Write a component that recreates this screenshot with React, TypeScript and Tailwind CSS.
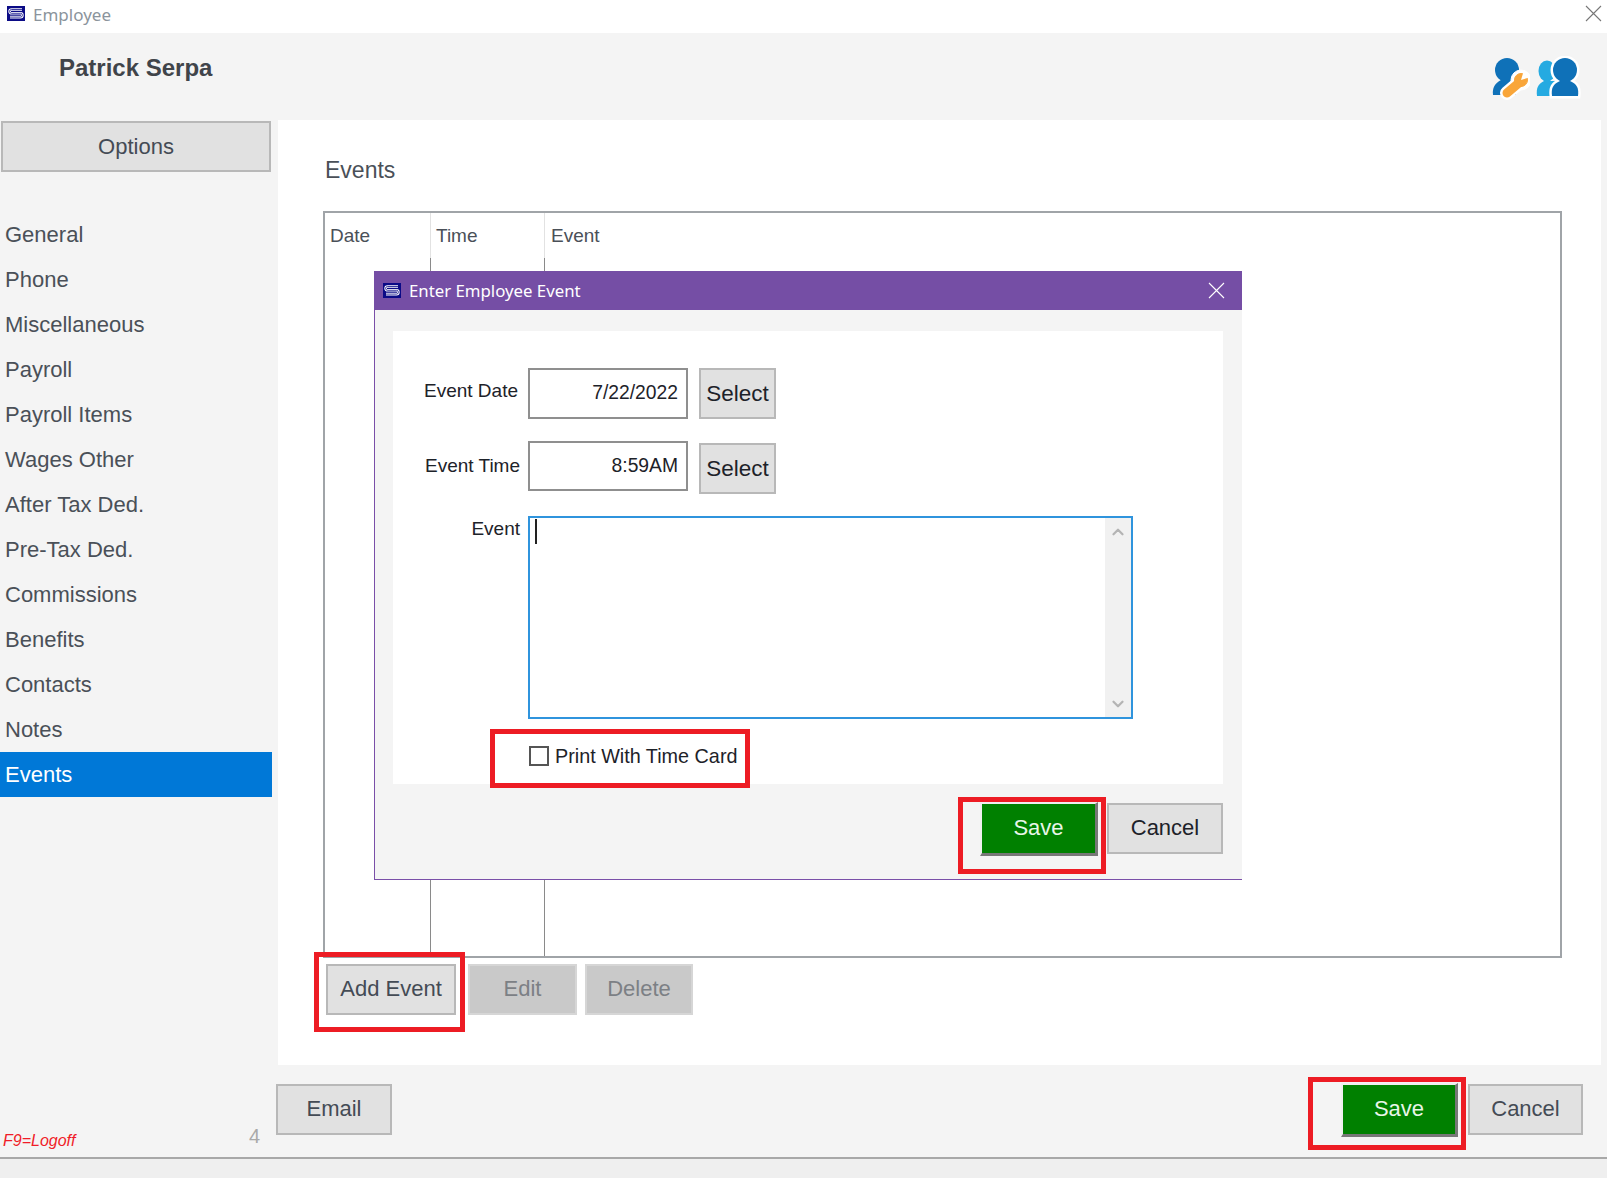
import { ChevronUp, ChevronDown } from "lucide-react"

const NAV = [
  "General",
  "Phone",
  "Miscellaneous",
  "Payroll",
  "Payroll Items",
  "Wages Other",
  "After Tax Ded.",
  "Pre-Tax Ded.",
  "Commissions",
  "Benefits",
  "Contacts",
  "Notes",
  "Events",
]

// ---- small app logo --------------------------
function Logo() {
  const s = "M15 3.500H4.500a1.800 1.800 0 0 0 0 3.800h9a1.800 1.800 0 0 1 0 3.800H3"
  return (
    <svg width="18" height="15" viewBox="0 0 18 15" className="shrink-0">
      <rect width="18" height="15" fill="#0b0b86" />
      <path d={s} fill="none" stroke="#fff" strokeWidth="2.600" />
      <path d={s} fill="none" stroke="#0b0b86" strokeWidth="0.800" />
    </svg>
  )
}

function CloseGlyph({ color }: { color: string }) {
  return (
    <svg width="17" height="17" viewBox="0 0 17 17" className="shrink-0">
      <path d="M1 1l15 15M16 1L1 16" stroke={color} strokeWidth="1.100" />
    </svg>
  )
}

function ToolIcons() {
  const wrench = (
    <>
      <path d="M17 37L30 26" strokeWidth="9" strokeLinecap="round" />
      <circle cx="31" cy="24" r="6.500" strokeWidth="1" />
    </>
  )
  return (
    <div className="flex items-start gap-[5px]">
      <svg width="40" height="44" viewBox="0 0 40 44">
        <ellipse cx="17" cy="14" rx="12" ry="12" fill="#0f71b8" />
        <path d="M3 39C2 32 5 27 11 24L26 24L26 39z" fill="#0f71b8" />
        <g stroke="#fff" fill="#fff">
          <path d="M17 37L30 26" strokeWidth="14" strokeLinecap="round" />
          <circle cx="31" cy="24" r="10" />
        </g>
        <g stroke="#f9a63a" fill="#f9a63a">{wrench}</g>
        <path d="M31 24L34 14L41 21z" fill="#fff" />
      </svg>
      <svg width="47" height="44" viewBox="0 0 47 44">
        <ellipse cx="12" cy="15" rx="8.500" ry="10.500" fill="#25aae1" />
        <path d="M2 40C1 32 3 28 9 25L22 25L22 40z" fill="#25aae1" />
        <g fill="#fff" stroke="#fff" strokeWidth="5">
          <ellipse cx="30" cy="14" rx="12" ry="12" />
          <path d="M17 40C16 32 18 28 25 25L35 25C42 28 44 32 43 40z" />
        </g>
        <ellipse cx="30" cy="14" rx="12" ry="12" fill="#0f71b8" />
        <path d="M17 40C16 32 18 28 25 25L35 25C42 28 44 32 43 40z" fill="#0f71b8" />
      </svg>
    </div>
  )
}

function GrayButton({ label, className = "" }: { label: string; className?: string }) {
  return (
    <button className={`flex items-center justify-center bg-[#e1e1e1] border-2 border-[#b8b8b8] text-[#444b55] ${className}`}>
      {label}
    </button>
  )
}

function SaveButton({ className = "" }: { className?: string }) {
  return (
    <button className={`flex items-center justify-center pb-[2px] bg-[#008000] text-[#e8f6e8] text-[22px] border-t-2 border-l-2 border-r-[3px] border-b-[3px] border-t-[#efefef] border-l-[#efefef] border-r-[#777] border-b-[#777] ${className}`}>
      Save
    </button>
  )
}

// ---- red annotation frames ------------------
function RedBox({ className }: { className: string }) {
  return <div className={`absolute border-[5px] border-[#ed1c24] pointer-events-none ${className}`} />
}

function EventDialog() {
  return (
    <div className="absolute left-[374px] top-[271px] w-[868px] h-[609px] flex flex-col bg-[#f4f4f4] border-l border-b border-[#7a4fa8]">
      <div className="h-[39px] -ml-px bg-[#754ea5] flex items-center pl-[9px] pr-[17px] text-white text-[16.800px] font-['Noto_Sans',sans-serif]">
        <Logo />
        <span className="ml-2 flex-1">Enter Employee Event</span>
        <CloseGlyph color="#fff" />
      </div>

      <div className="ml-[18px] mt-[21px] w-[830px] h-[453px] bg-white flex flex-col pt-[37px] text-[19px] text-[#1d2229]">
        <div className="flex h-[51px]">
          <span className="w-[125px] pt-[9px] text-right">Event Date</span>
          <div className="ml-[10px] w-[160px] h-[51px] border-2 border-[#8f8f8f] flex items-center justify-end pr-[8px] text-[19.300px]">7/22/2022</div>
          <GrayButton label="Select" className="ml-[11px] w-[77px] h-[51px] !text-[#1d2229] text-[22.500px]" />
        </div>
        <div className="flex h-[53px] mt-[22px]">
          <span className="w-[127px] pt-[11px] text-right">Event Time</span>
          <div className="ml-[8px] w-[160px] h-[50px] border-2 border-[#8f8f8f] flex items-center justify-end pr-[8px] text-[19.300px]">8:59AM</div>
          <GrayButton label="Select" className="ml-[11px] mt-[2px] w-[77px] h-[51px] !text-[#1d2229] text-[22.500px]" />
        </div>
        <div className="flex h-[203px] mt-[22px]">
          <span className="w-[127px] -mt-px text-right">Event</span>
          <div className="ml-[8px] w-[605px] h-[203px] border-2 border-[#2f94dd] flex">
            <div className="flex-1 pl-[5px] pt-[1px]">
              <div className="w-[2px] h-[25px] bg-[#222]" />
            </div>
            <div className="w-[26px] bg-[#f1f1f1] flex flex-col justify-between items-center pt-[5px] pb-[4px] text-[#b4b4b4]">
              <ChevronUp size={18} strokeWidth={3} />
              <ChevronDown size={18} strokeWidth={3} />
            </div>
          </div>
        </div>
        <label className="flex items-center ml-[136px] mt-[27px] h-[20px]">
          <span className="w-[20px] h-[20px] border-2 border-[#555] bg-white" />
          <span className="ml-[6px] mt-[2px] text-[19.800px] text-[#1d2229]">Print With Time Card</span>
        </label>
      </div>

      <div className="flex justify-end w-[848px] mt-[18px] gap-[9px]">
        <SaveButton className="w-[118px] h-[54px]" />
        <GrayButton label="Cancel" className="w-[116px] h-[51px] mt-[1px] pb-[2px] !text-[#1d2229] text-[22px]" />
      </div>
    </div>
  )
}

// header cell sits on a light rule, the body of the column on a darker one
function TableColumn({ label, className }: { label: string; className: string }) {
  return (
    <div className={`flex flex-col ${className}`}>
      <div className="h-[45px] pl-[5px] pt-[9px] border-r border-[#e2e2e2]">{label}</div>
      <div className="flex-1 border-r border-[#8a8a8a]" />
    </div>
  )
}

export default function App() {
  return (
    <div className="relative w-[1607px] h-[1178px] overflow-hidden flex flex-col bg-[#f4f4f4] font-['Liberation_Sans',Arial,sans-serif]">
      {/* Window title */}
      <div className="h-[33px] bg-white flex items-start pl-[7px] pr-[5px] text-[17px] text-[#8b949c] font-['Noto_Sans',sans-serif]">
        <div className="mt-[6px]">
          <Logo />
        </div>
        <span className="ml-[8px] flex-1 leading-[30px]">Employee</span>
        <div className="mt-[5px]">
          <CloseGlyph color="#777" />
        </div>
      </div>

      {/* Employee name + tool icons */}
      <div className="h-[87px] flex justify-between pl-[59px] pr-[25px]">
        <h1 className="pt-[18px] text-[24px] leading-[34px] font-bold text-[#40444a]">Patrick Serpa</h1>
        <div className="pt-[23px]">
          <ToolIcons />
        </div>
      </div>

      <div className="flex flex-1 min-h-0 border-b-2 border-[#a8a8a8]">
        {/* Side navigation */}
        <aside className="w-[278px] shrink-0 flex flex-col">
          <GrayButton label="Options" className="ml-px mt-px w-[270px] h-[51px] text-[22px]" />
          <nav className="mt-[40px] w-[272px] flex flex-col">
            {NAV.map((item) => (
              <div
                key={item}
                className={`h-[45px] flex items-center pl-[5px] text-[22px] ${item === "Events" ? "bg-[#0078d7] text-white" : "text-[#4a5058]"}`}
              >
                {item}
              </div>
            ))}
          </nav>
          <div className="mt-auto flex items-end justify-between pl-[3px] pr-[18px] pb-[4px]">
            <span className="text-[16px] italic text-[#f01c28]">F9=Logoff</span>
            <span className="mb-[2px] text-[20px] text-[#a9a9a9]">4</span>
          </div>
        </aside>

        <div className="flex-1 flex flex-col">
          {/* Events panel */}
          <main className="w-[1323px] h-[945px] bg-white pl-[45px] flex flex-col">
            <h2 className="mt-[34px] ml-[2px] h-[32px] leading-[32px] text-[23px] text-[#4a5058]">Events</h2>
            <div className="mt-[25px] w-[1239px] h-[747px] border-2 border-[#a0a4a8] flex text-[19px] text-[#4a5058]">
              <TableColumn label="Date" className="w-[106px]" />
              <TableColumn label="Time" className="w-[114px]" />
              <div className="flex-1 pl-[6px] pt-[9px]">Event</div>
            </div>
            <div className="flex mt-[6px] ml-[3px] h-[51px] text-[22px]">
              <GrayButton label="Add Event" className="w-[130px] h-[51px] pb-[2px]" />
              <button className="ml-[12px] w-[109px] h-[51px] pb-[2px] bg-[#c9c9c9] border-2 border-[#d6d6d6] text-[#7c8085]">Edit</button>
              <button className="ml-[8px] w-[108px] h-[51px] pb-[2px] bg-[#c9c9c9] border-2 border-[#d6d6d6] text-[#7c8085]">Delete</button>
            </div>
          </main>

          {/* Form actions */}
          <div className="flex-1 flex justify-between -ml-[2px] pr-[24px] pt-[19px] text-[22px]">
            <GrayButton label="Email" className="w-[116px] h-[51px] pb-[2px]" />
            <div className="flex gap-[10px] -mt-px">
              <SaveButton className="w-[117px] h-[54px]" />
              <GrayButton label="Cancel" className="w-[115px] h-[51px] mt-px pb-[2px]" />
            </div>
          </div>
        </div>
      </div>

      {/* Strip under the footer */}
      <div className="h-[19px] bg-[#efefef]" />

      <EventDialog />

      <RedBox className="left-[490px] top-[729px] w-[260px] h-[59px]" />
      <RedBox className="left-[958px] top-[797px] w-[148px] h-[77px]" />
      <RedBox className="left-[314px] top-[952px] w-[151px] h-[80px]" />
      <RedBox className="left-[1308px] top-[1077px] w-[158px] h-[73px]" />
    </div>
  )
}
